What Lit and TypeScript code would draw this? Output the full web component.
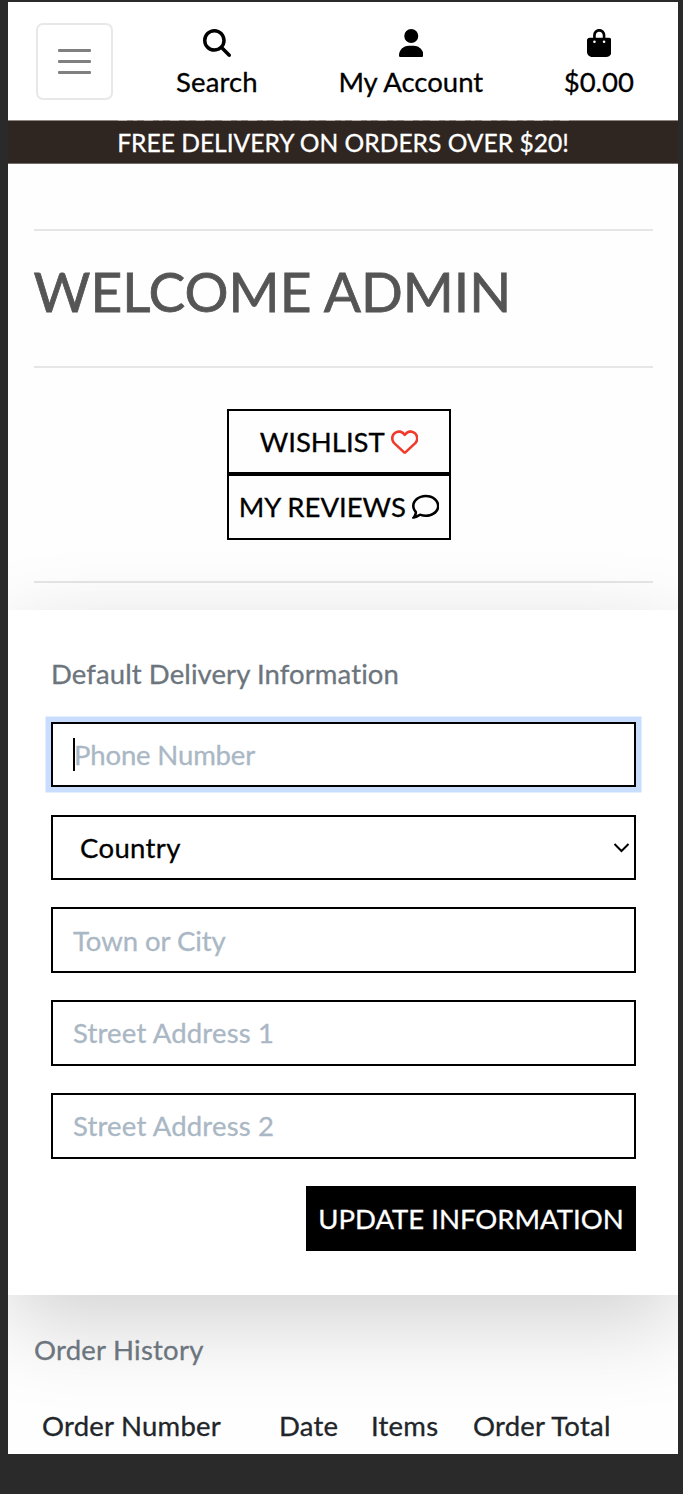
import { LitElement, html, css, svg } from "lit";
import { customElement } from "lit/decorators.js";

const icon = (cls: string, box: string, d: string) => html`<svg class=${cls} viewBox=${box} aria-hidden="true">${svg`<path d=${d} />`}</svg>`;

const SEARCH = "M416 208c0 45.900-14.900 88.300-40 122.700L502.600 457.400c12.500 12.500 12.500 32.800 0 45.300s-32.800 12.500-45.300 0L330.700 376c-34.400 25.200-76.800 40-122.700 40C93.100 416 0 322.900 0 208S93.100 0 208 0S416 93.100 416 208zM208 352a144 144 0 1 0 0-288 144 144 0 1 0 0 288z";
const USER = "M224 256A128 128 0 1 0 224 0a128 128 0 1 0 0 256zm-45.700 48C79.800 304 0 383.800 0 482.300C0 498.700 13.300 512 29.700 512H418.300c16.400 0 29.700-13.300 29.700-29.700C448 383.800 368.200 304 269.700 304H178.300z";
const BAG = "M160 112c0-35.300 28.700-64 64-64s64 28.700 64 64v48H160V112zm-48 48H48c-26.500 0-48 21.500-48 48V416c0 53 43 96 96 96H352c53 0 96-43 96-96V208c0-26.500-21.500-48-48-48H336V112C336 50.100 285.900 0 224 0S112 50.100 112 112v48zm24 48a24 24 0 1 1 0 48 24 24 0 1 1 0-48zm152 24a24 24 0 1 1 48 0 24 24 0 1 1-48 0z";
const HEART = "M225.800 468.200l-2.500-2.300L48.100 303.200C17.400 274.700 0 234.700 0 192.800v-3.300c0-70.400 50-130.800 119.200-144C158.600 37.900 198.900 47 231 69.600c9 6.400 17.400 13.800 25 22.300c4.200-4.800 8.700-9.200 13.500-13.300c3.700-3.200 7.500-6.200 11.500-9c32.100-22.600 72.400-31.700 111.800-24.200C462 58.600 512 119.100 512 189.500v3.300c0 41.900-17.400 81.900-48.100 110.400L288.700 465.900l-2.500 2.300c-8.200 7.600-19 11.900-30.200 11.900s-22-4.200-30.200-11.900zM239.100 145c-.4-.3-.7-.7-1-1.100l-17.800-20c0 0-.1-.1-.1-.1c-23.100-25.900-58-37.700-92-31.200C81.600 101.500 48 142.100 48 189.500v3.300c0 28.500 11.900 55.800 32.800 75.200L256 430.700 431.200 268c20.900-19.400 32.800-46.700 32.800-75.200v-3.300c0-47.300-33.600-88-80.100-96.900c-34-6.500-69 5.400-92 31.200c0 0-.1.1-.1.1l-17.800 20c-.3.4-.7.7-1 1.100c-4.500 4.500-10.600 7-16.900 7s-12.400-2.500-16.900-7z";
const COMMENT = "M123.600 391.300c12.900-9.400 29.600-11.800 44.600-6.400c26.500 9.600 56.200 15.100 87.800 15.100c124.700 0 208-80.500 208-160s-83.300-160-208-160S48 160.500 48 240c0 32 12.400 62.800 35.700 89.200c8.600 9.700 12.800 22.500 11.800 35.500c-1.400 18.100-5.700 34.700-11.300 49.400c17-7.900 31.100-16.700 39.400-22.700zM21.200 431.900c1.800-2.700 3.500-5.400 5.100-8.100c10-16.600 19.500-38.400 21.400-62.900C17.700 326.800 0 285.100 0 240C0 125.100 114.600 32 256 32s256 93.100 256 208s-114.600 208-256 208c-37.100 0-72.300-6.400-104.100-17.900c-11.900 8.700-31.300 20.600-54.300 30.600c-15.100 6.600-32.300 12.600-50.100 16.100c-.8.2-1.600.3-2.400.5c-4.400.8-8.700 1.500-13.200 1.900c-.2 0-.5.1-.7.1c-5.100.5-10.200.8-15.300.8c-6.500 0-12.300-3.900-14.800-9.900c-2.500-6-1.100-12.800 3.400-17.400c4.100-4.200 7.800-8.700 11.300-13.500c1.700-2.300 3.300-4.600 4.800-6.900z";

@customElement("app-root")
export class AppRoot extends LitElement {
  static styles = css`
    :host { display: block; }
    * { box-sizing: border-box; }
    .stage { height: 1494px; padding: 2px 5px 40px 8px; background: #2a2a2a; font-family: Lato, sans-serif; font-size: 27.5px; line-height: 41.25px; color: #000; font-variant-ligatures: none; -webkit-text-stroke: 0.3px currentColor; }
    .page { height: 1452px; overflow: hidden; background: #fefefe; display: flex; flex-direction: column; }
    header { flex: none; height: 118px; background: #fff; display: flex; align-items: flex-start; padding: 21px 0 0 27.500px; }
    .toggle { flex: none; width: 77.500px; height: 77px; border: 2px solid #e8e8e8; border-radius: 7px; background: #fff; padding: 0; display: flex; flex-direction: column; align-items: center; justify-content: center; gap: 8px; }
    .toggle i { width: 33px; height: 3px; border-radius: 1px; background: #808080; }
    .links { flex: 1; display: flex; margin: 0; padding: 5.500px 44px 0 63px; list-style: none; justify-content: space-between; }
    .links li { display: flex; flex-direction: column; align-items: center; white-space: nowrap; }
    svg { fill: currentColor; stroke: none; display: block; }
    .nav-icon { height: 28px; margin-bottom: 4px; }
    .search { letter-spacing: 0.15px; }
    .banner { flex: none; height: 44px; border-bottom: 1px solid #746b67; background: #2f2521; color: #fff; font-size: 24.6px; line-height: 44px; text-align: center; white-space: nowrap; }
    .seam { height: 1px; background: #8d8682; padding: 0 109px 0 110px; }
    .seam i { display: block; height: 1px; background: repeating-linear-gradient(90deg, #b5b0ad 0 9px, #8d8682 9px 15px, #a8a3a0 15px 19px, #8d8682 19px 26px); }
    .content { flex: none; padding: 65px 25px 0 26px; height: 446px; display: flex; flex-direction: column; }
    hr { margin: 0; width: 100%; border: 0; height: 2px; flex: none; background: #e6e6e6; }
    h1 { margin: 26px 0 41px -0.5px; font-size: 55px; line-height: 68px; font-weight: 400; color: #555; white-space: nowrap; -webkit-text-stroke: 0.8px #555; }
    .actions { width: 224px; margin: 40.500px 0 41.500px 193px; flex: none; }
    .action { height: 65.500px; border: 2px solid #000; display: flex; align-items: center; justify-content: center; gap: 6px; white-space: nowrap; }
    .action-icon { width: 27.500px; height: 27.500px; }
    .red { color: #f03a2b; }
    .card { flex: none; height: 685px; background: #fff; padding: 43px 42px 0 43px; box-shadow: 0 27.500px 82.500px rgba(0, 0, 0, 0.175); display: flex; flex-direction: column; }
    .muted { margin: 0; color: #6c757d; letter-spacing: 0.1px; }
    .card .muted { margin-bottom: 27.500px; }
    .field { height: 65.500px; margin-bottom: 27.350px; flex: none; border: 2px solid #000; background: #fff; padding: 0 20px; display: flex; align-items: center; color: #aab7c4; letter-spacing: 0.17px; }
    .focus { box-shadow: 0 0 0 5.500px #c9deff; letter-spacing: -0.15px; }
    .caret { width: 2px; height: 33px; margin-right: -1px; background: #000; }
    .select { color: #000; padding: 0 4px 0 27px; justify-content: space-between; letter-spacing: 0.35px; }
    .tight { letter-spacing: -0.05px; }
    .chevron { width: 17px; height: 11px; fill: none; stroke: #000; stroke-width: 2; }
    .update { align-self: flex-end; width: 330px; height: 65.500px; padding: 0; border: 0; background: #000; color: #fff; font: inherit; -webkit-text-stroke: inherit; white-space: nowrap; }
    .history { padding: 34px 26px 0; }
    .history .muted { letter-spacing: 0.24px; }
    .heads { display: flex; padding-left: 8px; margin-top: 35px; color: #212529; white-space: nowrap; letter-spacing: 0.24px; }
    .c1 { width: 237px; } .c2 { width: 92px; } .c3 { width: 102px; }
  `;

  render() {
    return html`<div class="stage"><main class="page">
      <header>
        <button class="toggle" aria-label="Menu"><i></i><i></i><i></i></button>
        <ul class="links">
          <li>${icon("nav-icon", "0 0 512 512", SEARCH)}<span class="search">Search</span></li>
          <li>${icon("nav-icon", "0 0 448 512", USER)}<span>My Account</span></li>
          <li>${icon("nav-icon", "0 0 448 512", BAG)}<span>$0.00</span></li>
        </ul>
      </header>
      <div class="banner"><div class="seam"><i></i></div>FREE DELIVERY ON ORDERS OVER $20!</div>
      <section class="content">
        <hr /><h1>WELCOME ADMIN</h1><hr />
        <div class="actions">
          <div class="action"><span>WISHLIST</span>${icon("action-icon red", "0 0 512 512", HEART)}</div>
          <div class="action"><span>MY REVIEWS</span>${icon("action-icon", "0 0 512 512", COMMENT)}</div>
        </div>
        <hr />
      </section>
      <section class="card">
        <p class="muted">Default Delivery Information</p>
        <div class="field focus"><span class="caret"></span><span>Phone Number</span></div>
        <div class="field select"><span>Country</span><svg class="chevron" viewBox="0 0 17 11"><path d="M1.500 2l7 7 7-7" /></svg></div>
        <div class="field tight"><span>Town or City</span></div>
        ${["Street Address 1", "Street Address 2"].map((t) => html`<div class="field"><span>${t}</span></div>`)}
        <button class="update">UPDATE INFORMATION</button>
      </section>
      <section class="history">
        <p class="muted">Order History</p>
        <div class="heads"><span class="c1">Order Number</span><span class="c2">Date</span><span class="c3">Items</span><span>Order Total</span></div>
      </section>
    </main></div>`;
  }
}
